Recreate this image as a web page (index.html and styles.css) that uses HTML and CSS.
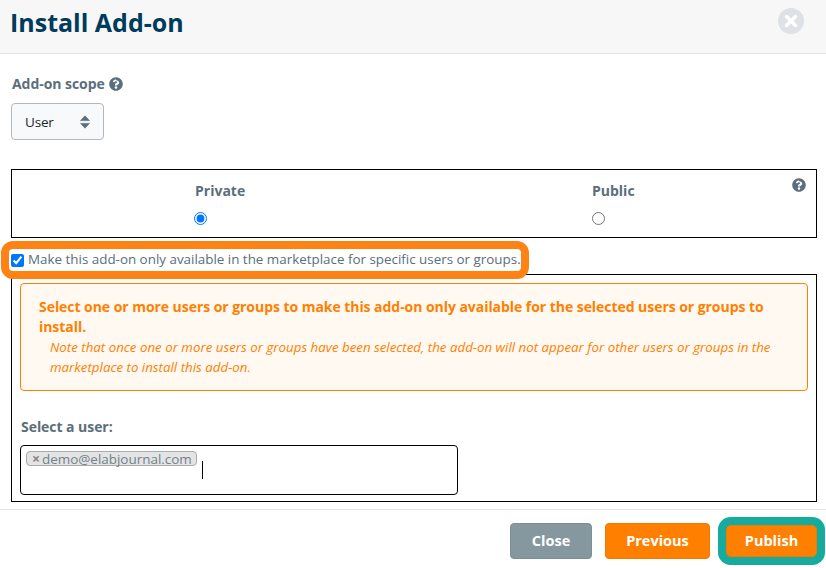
FILE: index.html
```html
<!DOCTYPE html>
<html lang="en">
<head>
<meta charset="utf-8">
<title>Install Add-on</title>
<link rel="stylesheet" href="styles.css">
</head>
<body>
<div class="modal">
  <header class="modal-header">
    <h1 class="title">Install Add-on</h1>
    <span class="close-x">
      <svg width="14" height="14" viewBox="0 0 14 14"><path d="M2.5 2.5l9 9M11.500 2.500l-9 9" stroke="#fff" stroke-width="3.400" stroke-linecap="round"/></svg>
    </span>
  </header>
  <main class="modal-body">
    <div class="scope-label">Add-on scope
      <svg class="help" viewBox="0 0 512 512"><path fill-rule="evenodd" d="M504 256c0 137-111 248-248 248S8 393 8 256 119 8 256 8s248 111 248 248zM263 90c-54 0-89 23-121 62-4 5-3 13 2 17l34 26c5 4 13 3 17-2 18-22 30-35 56-35 20 0 45 13 45 32 0 15-12 22-32 33-23 13-48 35-48 68v9c0 7 5 12 12 12h56c7 0 12-5 12-12v-1c0-28 79-29 79-93 0-50-52-88-112-88zM256 338c-27 0-48 22-48 48s21 48 48 48 48-22 48-48-21-48-48-48z"/></svg>
    </div>
    <div class="select">
      <span>User</span>
      <svg class="sort" width="10" height="14" viewBox="0 0 10 14"><path d="M5 .8L9.500 5.600H.5zM5 13.200L.5 8.400h9z" fill="#5b6e7c" stroke="#5b6e7c" stroke-width=".6" stroke-linejoin="round"/></svg>
    </div>
    <section class="visibility">
      <div class="vis-col">
        <strong>Private</strong>
        <input type="radio" name="vis" checked>
      </div>
      <div class="vis-col">
        <strong>Public</strong>
        <input type="radio" name="vis">
      </div>
      <svg class="help help-corner" viewBox="0 0 512 512"><path fill-rule="evenodd" d="M504 256c0 137-111 248-248 248S8 393 8 256 119 8 256 8s248 111 248 248zM263 90c-54 0-89 23-121 62-4 5-3 13 2 17l34 26c5 4 13 3 17-2 18-22 30-35 56-35 20 0 45 13 45 32 0 15-12 22-32 33-23 13-48 35-48 68v9c0 7 5 12 12 12h56c7 0 12-5 12-12v-1c0-28 79-29 79-93 0-50-52-88-112-88zM256 338c-27 0-48 22-48 48s21 48 48 48 48-22 48-48-21-48-48-48z"/></svg>
    </section>
    <label class="check-row">
      <input type="checkbox" checked>
      <span>Make this add-on only available in the marketplace for specific users or groups.</span>
    </label>
    <section class="restrict">
      <div class="alert">
        <div class="alert-title">Select one or more users or groups to make this add-on only available for the selected users or groups to install.</div>
        <div class="alert-note">Note that once one or more users or groups have been selected, the add-on will not appear for other users or groups in the marketplace to install this add-on.</div>
      </div>
      <div class="user-label">Select a user:</div>
      <div class="user-input">
        <span class="tag"><span class="tag-x">×</span>demo@elabjournal.com</span>
        <span class="caret"></span>
      </div>
    </section>
  </main>
  <footer class="modal-footer">
    <button class="btn btn-grey">Close</button>
    <button class="btn btn-orange">Previous</button>
    <button class="btn btn-orange btn-publish">Publish</button>
  </footer>
</div>
</body>
</html>
```
FILE: styles.css
```css
* { box-sizing: border-box; }
html, body { margin: 0; height: 100%; }
body {
  width: 826px;
  height: 568px;
  overflow: hidden;
  background: #fff;
  font-family: "Open Sans", sans-serif;
  font-size: 14px;
  color: #5b6e7c;
}
.modal-header {
  height: 54px;
  background: #f7f7f7;
  border-bottom: 1px solid #e3e3e3;
  display: flex;
  justify-content: space-between;
  align-items: flex-start;
  padding: 6px 22px 0 10px;
}
.title {
  margin: 0;
  font-size: 25px;
  line-height: 32px;
  font-weight: 700;
  color: #003b5c;
}
.close-x {
  width: 26px;
  height: 26px;
  margin-top: 2px;
  border-radius: 50%;
  background: #dee2e6;
  display: flex;
  align-items: center;
  justify-content: center;
}
.modal-body { padding: 20px 9px 0 11px; }
.scope-label {
  font-weight: 700;
  line-height: 20px;
  padding-left: 1px;
  display: flex;
  align-items: center;
  gap: 4px;
  letter-spacing: -.05px;
}
.help { width: 14px; height: 14px; fill: #5b6e7c; }
.select {
  width: 93px;
  height: 37px;
  margin-top: 9px;
  border: 1px solid #b5b8bb;
  border-radius: 4px;
  background: #f8f9fa;
  color: #212529;
  display: flex;
  align-items: center;
  justify-content: space-between;
  padding: 0 13px;
  font-size: 13.5px;
  letter-spacing: -.2px;
}
.visibility {
  position: relative;
  height: 69px;
  margin-top: 29px;
  border: 1px solid #000;
  display: grid;
  grid-template-columns: 397px 1fr;
  padding: 11px 0 0 183px;
}
.vis-col { display: flex; flex-direction: column; align-items: flex-start; }
.vis-col strong { line-height: 20px; }
.vis-col input { margin: 11px 0 0; width: 13px; height: 13px; }
.vis-col:first-child input { margin-left: -1px; }
.help-corner { position: absolute; top: 8px; right: 10px; }
.check-row {
  position: relative;
  z-index: 1;
  display: flex;
  align-items: center;
  width: 528px;
  height: 38px;
  margin: 3px 0 -5px -10px;
  border: 8px solid #ff8214;
  border-radius: 12px;
  background: #fff;
  white-space: nowrap;
  font-size: 13.4px;
}
.check-row span { position: relative; top: -1px; }
.check-row input { margin: 0 4px 0 2px; width: 13px; height: 13px; }
.restrict {
  position: relative;
  height: 228px;
  border: 1px solid #000;
  padding: 8px 8px 0;
}
.alert {
  height: 108px;
  padding: 13px 18px 0;
  background: #fff9f2;
  border: 1px solid #ff8000;
  border-radius: 4px;
  color: #ff8000;
  line-height: 20px;
}
.alert-title { font-weight: 700; letter-spacing: -.05px; }
.alert-note { font-style: italic; padding-left: 11px; font-size: 13.3px; }
.user-label { margin-top: 26px; font-weight: 700; line-height: 20px; padding-left: 1px; letter-spacing: -.05px; }
.user-input {
  width: 438px;
  height: 50px;
  margin-top: 8px;
  border: 1px solid #000;
  border-radius: 4px;
  padding: 5px;
  display: flex;
  align-items: flex-start;
}
.tag {
  height: 15px;
  width: 171px;
  background: #e4e4e4;
  border: 1px solid #aaa;
  border-radius: 4px;
  line-height: 14px;
  padding-left: 5px;
  color: #6f838e;
  white-space: nowrap;
  font-size: 13.45px;
}
.tag-x { font-weight: 700; color: #888; margin-right: 2px; font-size: 14px; }
.caret { width: 1px; height: 18px; background: #000; margin: 10px 0 0 5px; }
.modal-footer {
  position: absolute;
  top: 509px;
  left: 0;
  width: 826px;
  height: 59px;
  border-top: 1px solid #e3e3e3;
  display: flex;
  align-items: flex-start;
  padding: 13px 9px 0 0;
  justify-content: flex-end;
}
.btn {
  height: 36px;
  border: 1px solid transparent;
  border-radius: 4px;
  font: 700 14.5px/20px "Open Sans", sans-serif;
  color: #fff;
  padding: 0;
}
.btn-grey { width: 82px; background: #86989f; border-color: #7c8e96; margin-right: 13px; }
.btn-orange { width: 105px; background: #ff8000; border-color: #f07a05; }
.btn-publish {
  width: 91px;
  height: 32px;
  margin: 2px 0 0 16px;
  box-shadow: 0 0 0 8px #17ab9e;
  border-radius: 5px;
}
```
